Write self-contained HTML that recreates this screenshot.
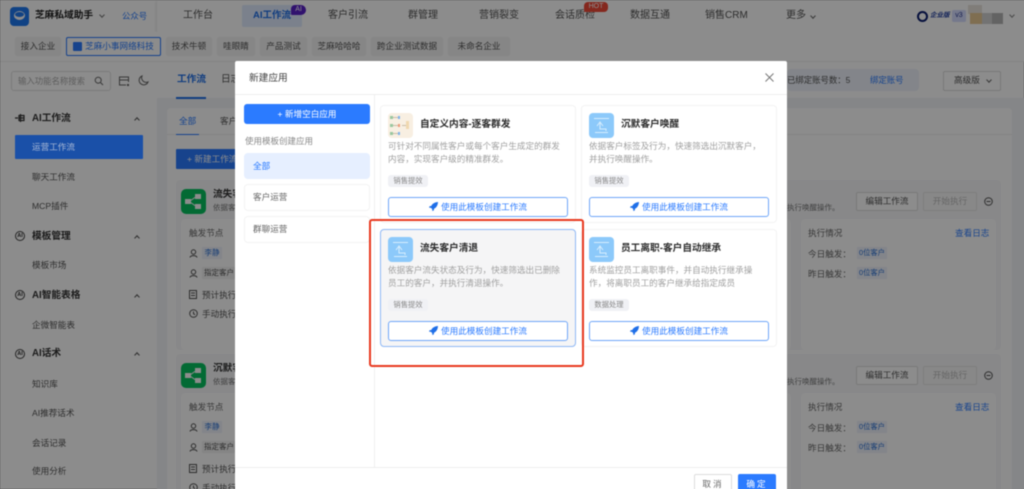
<!DOCTYPE html>
<html lang="zh"><head><meta charset="utf-8"><title>新建应用</title>
<style>
*{box-sizing:border-box}
html,body{margin:0;padding:0;width:1024px;height:489px;overflow:hidden;background:#8c8c8c}
body{font-family:"Liberation Sans","Noto Sans CJK SC",sans-serif;color:#333;position:relative}
.a{position:absolute;white-space:nowrap;line-height:1}
.b{position:absolute}
#root{position:absolute;left:-6px;top:-6px;width:1036px;height:501px;overflow:hidden;filter:blur(.5px)}
#in{position:absolute;left:6px;top:6px;width:1024px;height:489px;background:#fff}
.tag{position:absolute;top:37px;height:19px;background:#f5f5f5;border-radius:2px;font-size:8.6px;line-height:19px;text-align:center;color:#555}
.nav{position:absolute;top:11px;font-size:10px;line-height:10px;color:#555;white-space:nowrap}
.si{position:absolute;left:32px;font-size:8.6px;line-height:10px;color:#555;white-space:nowrap}
.sh{position:absolute;left:32px;font-size:9.7px;line-height:10px;font-weight:700;color:#333;white-space:nowrap}
.ci{position:absolute;left:15px;width:10px;height:10px;border:1px solid #444;border-radius:50%;font-size:5.5px;line-height:8px;text-align:center;color:#333;font-weight:700}
.ch{position:absolute;left:135px;width:4px;height:4px;border-left:1px solid #555;border-top:1px solid #555;transform:rotate(45deg)}
.card{position:absolute;left:176px;width:825px;height:170px;background:#f7f8fa;border-radius:4px}
.g{position:absolute;left:5px;top:9px;width:25px;height:25px;background:#07c160;border-radius:5px}
.pn{position:absolute;background:#fff;border-radius:4px}
.t9{position:absolute;font-size:8.6px;line-height:10px;color:#555;white-space:nowrap}
.mc{position:absolute;width:196px;background:#fff;border:1px solid #f3f3f3;border-radius:4px}
.ic{position:absolute;left:7px;top:7px;width:25px;height:25px;background:#8cc9fa;border-radius:4px}
.tt{position:absolute;left:39px;top:13px;font-size:9.7px;line-height:12px;font-weight:700;color:#2c2c2c;white-space:nowrap}
.ds{position:absolute;left:7px;font-size:8.6px;line-height:10px;color:#a0a0a0;white-space:nowrap}
.lb{position:absolute;left:7px;width:40px;height:12px;background:#f0f1f5;border-radius:3px;font-size:7.3px;line-height:12px;text-align:center;color:#888}
.bt{position:absolute;left:7px;width:180px;height:20px;border:1px solid #6fa6f8;border-radius:3px;background:#fff;font-size:8.6px;line-height:18px;text-align:center;color:#2b7bff}
.bt svg{vertical-align:-1px;margin-right:3px}
.lc{position:absolute;left:9px;width:126px;height:27px;border:1px solid #f3f3f3;border-radius:4px;font-size:8.6px;line-height:25px;padding-left:8px;color:#666}
</style></head><body><div id="root"><div id="in">

<!-- background page -->
<div class="b" style="left:157px;top:0;width:873px;height:32px;background:#fff;box-shadow:0 1px 3px rgba(0,0,0,.18)"></div>
<div class="b" style="left:10px;top:7px;width:19px;height:19px;background:#1e78f0;border-radius:4px"></div>
<div class="b" style="left:14px;top:11px;width:11px;height:9px;background:#fff;border-radius:50%"></div>
<div class="b" style="left:15px;top:12px;width:9px;height:5px;background:#1e78f0;border-radius:50%"></div>
<div class="a" style="left:35px;top:11px;font-size:9.7px;font-weight:700;color:#222">芝麻私域助手</div>
<div class="b" style="left:100px;top:13px;width:4px;height:4px;border-right:1px solid #777;border-bottom:1px solid #777;transform:rotate(45deg)"></div>
<div class="a" style="left:122px;top:12px;font-size:8.4px;color:#2b7bff">公众号</div>

<div class="nav" style="left:183px">工作台</div>
<div class="b" style="left:242px;top:5px;width:60px;height:22px;background:#e0ebff;border-radius:2px"></div>
<div class="nav" style="left:253px;color:#1f6fe8;font-weight:700;font-size:9.5px">AI工作流</div>
<div class="b" style="left:291px;top:5px;width:15px;height:10px;background:#5a22c9;border-radius:4px 5px 5px 1px;color:#fff;font-size:7px;line-height:10px;text-align:center">AI</div>
<div class="nav" style="left:328px">客户引流</div>
<div class="nav" style="left:408px">群管理</div>
<div class="nav" style="left:479px">营销裂变</div>
<div class="nav" style="left:555px">会话质检</div>
<div class="b" style="left:584px;top:2px;width:24px;height:10px;background:#f04a38;border-radius:4px 4px 4px 1px;color:#fff;font-size:7px;line-height:10px;text-align:center">HOT</div>
<div class="nav" style="left:630px">数据互通</div>
<div class="nav" style="left:705px">销售CRM</div>
<div class="nav" style="left:786px">更多</div>
<div class="b" style="left:811px;top:14px;width:4px;height:4px;border-right:1px solid #666;border-bottom:1px solid #666;transform:rotate(45deg)"></div>

<div class="b" style="left:917px;top:11px;width:11px;height:11px;border:2.5px solid #0a1d6e;border-radius:50%"></div>
<div class="a" style="left:930px;top:13px;font-size:6.5px;font-style:italic;font-weight:700;color:#1c3a9e">企业版</div>
<div class="b" style="left:952px;top:10px;width:14px;height:12px;background:#d5dcff;border-radius:2px;color:#2a3a90;font-size:7px;line-height:12px;text-align:center">v3</div>
<div class="b" style="left:968px;top:5px;width:14px;height:9px;background:#e9e3dc"></div>
<div class="b" style="left:970px;top:13px;width:12px;height:11px;background:#e8c894"></div>
<div class="b" style="left:982px;top:13px;width:10px;height:11px;background:#d2d2d2"></div>
<div class="b" style="left:992px;top:13px;width:11px;height:11px;background:#b5b5b5"></div>
<div class="b" style="left:1010px;top:13px;width:4px;height:4px;border-right:1px solid #888;border-bottom:1px solid #888;transform:rotate(45deg)"></div>

<div class="b" style="left:0;top:32px;width:1030px;height:30px;background:#fff;border-bottom:1px solid #eee"></div>
<div class="tag" style="left:15px;width:46px">接入企业</div>
<div class="tag" style="left:66px;width:95px;background:#fff;border:1px solid #2b7bff;color:#2b7bff;line-height:17px;padding-left:12px">芝麻小事网络科技</div>
<div class="b" style="left:73px;top:42px;width:9px;height:9px;background:#2b7bff;border-radius:1px"></div>
<div class="tag" style="left:166px;width:46px">技术牛顿</div>
<div class="tag" style="left:217px;width:38px">哇眼睛</div>
<div class="tag" style="left:260px;width:47px">产品测试</div>
<div class="tag" style="left:312px;width:54px">芝麻哈哈哈</div>
<div class="tag" style="left:371px;width:72px">跨企业测试数据</div>
<div class="tag" style="left:448px;width:62px">未命名企业</div>

<!-- sidebar -->
<div class="b" style="left:11px;top:71px;width:100px;height:20px;border:1px solid #e0e0e0;border-radius:3px"></div>
<div class="a" style="left:18px;top:77px;font-size:8.4px;color:#aaa">输入功能名称搜索</div>
<svg class="b" style="left:94px;top:76px" width="10" height="10" viewBox="0 0 10 10" fill="none" stroke="#666"><circle cx="4.2" cy="4.2" r="3"/><path d="M6.5 6.5L9 9"/></svg>
<svg class="b" style="left:118px;top:75px" width="12" height="12" viewBox="0 0 12 12" fill="none" stroke="#666"><path d="M8 10H1.500V2h9v5M1.500 5h9"/><path d="M10 9v2" stroke-width="2"/></svg>
<svg class="b" style="left:138px;top:75px" width="11" height="11" viewBox="0 0 11 11" fill="none" stroke="#666"><path d="M4 1a4.600 4.600 0 1 0 6 6A4.600 4.600 0 0 1 4 1z"/></svg>

<svg class="b" style="left:15px;top:113px" width="10" height="10" viewBox="0 0 10 10" fill="none" stroke="#333" stroke-width="1.200"><path d="M0 5h3M4 2.500h5v5H4zM4 5h5M5.500 1v8"/></svg>
<div class="sh" style="top:114px">AI工作流</div><div class="ch" style="top:118px"></div>
<div class="si" style="top:172px">聊天工作流</div>
<div class="si" style="top:201px">MCP插件</div>
<div class="ci" style="top:231px">AI</div><div class="sh" style="top:232px">模板管理</div><div class="ch" style="top:236px"></div>
<div class="si" style="top:260px">模板市场</div>
<div class="ci" style="top:290px">AI</div><div class="sh" style="top:291px">AI智能表格</div><div class="ch" style="top:295px"></div>
<div class="si" style="top:320px">企微智能表</div>
<div class="ci" style="top:349px">AI</div><div class="sh" style="top:349px">AI话术</div><div class="ch" style="top:353px"></div>
<div class="si" style="top:379px">知识库</div>
<div class="si" style="top:408px">AI推荐话术</div>
<div class="si" style="top:438px">会话记录</div>
<div class="si" style="top:466px">使用分析</div>

<!-- main -->
<div class="a" style="left:177px;top:75px;font-size:9.7px;font-weight:700;color:#1f6fe8">工作流</div>
<div class="a" style="left:221px;top:75px;font-size:9.7px;color:#555">日志</div>
<div class="b" style="left:157px;top:98px;width:873px;height:397px;background:#f2f4f7"></div>
<div class="b" style="left:176px;top:97px;width:30px;height:2px;background:#1f6fe8"></div>
<div class="b" style="left:787px;top:69px;width:132px;height:22px;background:#eef3fb;border-radius:4px"></div>
<div class="a" style="left:787px;top:76px;font-size:8.4px;color:#555">已绑定账号数：5</div>
<div class="a" style="left:870px;top:76px;font-size:8.4px;color:#2b7bff">绑定账号</div>
<div class="b" style="left:943px;top:71px;width:58px;height:20px;background:#fff;border:1px solid #ddd;border-radius:2px"></div>
<div class="a" style="left:954px;top:76px;font-size:8.6px;color:#555">高级版</div>
<div class="b" style="left:987px;top:78px;width:4px;height:4px;border-right:1px solid #666;border-bottom:1px solid #666;transform:rotate(45deg)"></div>
<div class="b" style="left:167px;top:108px;width:845px;height:387px;background:#fff;border-radius:4px"></div>
<div class="b" style="left:167px;top:134px;width:845px;height:1px;background:#eee"></div>
<div class="a" style="left:179px;top:117px;font-size:8.6px;color:#2b7bff">全部</div>
<div class="b" style="left:176px;top:134px;width:23px;height:1px;background:#2b7bff"></div>
<div class="a" style="left:220px;top:117px;font-size:8.6px;color:#555">客户</div>
<div class="b" style="left:176px;top:149px;width:64px;height:20px;background:#2b7bff;border-radius:1px"></div>
<div class="a" style="left:187px;top:155px;font-size:8.6px;color:#fff">+ 新建工作流</div>

<div class="card" style="top:180px">
 <div class="g"></div>
 <svg class="b" style="left:9px;top:14px" width="17" height="15" viewBox="0 0 17 15" fill="#fff"><rect x="0" y="5" width="6" height="5"/><rect x="10" y="0" width="6" height="5"/><rect x="10" y="10" width="6" height="5"/><path d="M5 7L12 2M5 8l7 5" stroke="#fff"/></svg>
 <div class="a" style="left:37px;top:10px;font-size:9.7px;font-weight:700;color:#333">流失客户清退</div>
 <div class="a" style="left:37px;top:24px;font-size:7.5px;color:#777">依据客户</div>
 <div class="pn" style="left:5px;top:39px;width:610px;height:131px"></div>
 <div class="t9" style="left:13px;top:48px;color:#666">触发节点</div>
 <svg class="b" style="left:13px;top:69px" width="9" height="9" viewBox="0 0 9 9" fill="none" stroke="#555"><circle cx="4.500" cy="3" r="2.200"/><path d="M1 8.500c.5-2.500 6.500-2.500 7 0"/></svg>
 <div class="a" style="left:26px;top:67px;width:20px;height:12px;background:#eef3fb;font-size:7.5px;line-height:12px;text-align:center;color:#2b6fd4">李静</div>
 <svg class="b" style="left:13px;top:89px" width="9" height="9" viewBox="0 0 9 9" fill="none" stroke="#555"><circle cx="4.500" cy="3" r="2.200"/><path d="M1 8.500c.5-2.500 6.500-2.500 7 0"/></svg>
 <div class="a" style="left:26px;top:87px;width:40px;height:12px;background:#f2f2f2;font-size:7.5px;line-height:12px;padding-left:2px;color:#555">指定客户</div>
 <svg class="b" style="left:13px;top:110px" width="9" height="9" viewBox="0 0 9 9" fill="none" stroke="#555"><rect x=".5" y=".5" width="7" height="8"/><path d="M2 3h4M2 5.500h4"/></svg>
 <div class="t9" style="left:26px;top:110px">预计执行</div>
 <svg class="b" style="left:13px;top:129px" width="9" height="9" viewBox="0 0 9 9" fill="none" stroke="#555"><circle cx="4.500" cy="4.500" r="3.800"/><path d="M4.500 2.500v2.200l1.500 1"/></svg>
 <div class="t9" style="left:26px;top:129px">手动执行</div>
 <div class="b" style="left:680px;top:12px;width:62px;height:19px;background:#fff;border:1px solid #ddd;border-radius:2px;font-size:8.6px;line-height:17px;text-align:center;color:#555">编辑工作流</div>
 <div class="b" style="left:747px;top:12px;width:54px;height:19px;background:#f7f7f7;border:1px solid #e4e4e4;border-radius:2px;font-size:8.6px;line-height:17px;text-align:center;color:#bbb">开始执行</div>
 <svg class="b" style="left:808px;top:17px" width="9" height="9" viewBox="0 0 9 9" fill="none" stroke="#555"><circle cx="4.500" cy="4.500" r="3.800"/><path d="M2.500 4.500h4"/></svg>
 <div class="a" style="left:611px;top:24px;font-size:7.5px;color:#777">执行唤醒操作。</div>
 <div class="pn" style="left:625px;top:39px;width:195px;height:131px"></div>
 <div class="t9" style="left:632px;top:48px;color:#666">执行情况</div>
 <div class="t9" style="left:779px;top:48px;color:#2b7bff">查看日志</div>
 <div class="t9" style="left:632px;top:69px;color:#666">今日触发：</div>
 <div class="a" style="left:681px;top:67px;width:30px;height:12px;background:#eef3fb;font-size:7.3px;line-height:12px;text-align:center;color:#2b6fd4">0位客户</div>
 <div class="t9" style="left:632px;top:89px;color:#666">昨日触发：</div>
 <div class="a" style="left:681px;top:87px;width:30px;height:12px;background:#eef3fb;font-size:7.3px;line-height:12px;text-align:center;color:#2b6fd4">0位客户</div>
</div>

<div class="card" style="top:354px;height:141px">
 <div class="g"></div>
 <svg class="b" style="left:9px;top:14px" width="17" height="15" viewBox="0 0 17 15" fill="#fff"><rect x="0" y="5" width="6" height="5"/><rect x="10" y="0" width="6" height="5"/><rect x="10" y="10" width="6" height="5"/><path d="M5 7L12 2M5 8l7 5" stroke="#fff"/></svg>
 <div class="a" style="left:37px;top:10px;font-size:9.7px;font-weight:700;color:#333">沉默客户唤醒</div>
 <div class="a" style="left:37px;top:24px;font-size:7.5px;color:#777">依据客户</div>
 <div class="pn" style="left:5px;top:39px;width:610px;height:102px"></div>
 <div class="t9" style="left:13px;top:48px;color:#666">触发节点</div>
 <svg class="b" style="left:13px;top:69px" width="9" height="9" viewBox="0 0 9 9" fill="none" stroke="#555"><circle cx="4.500" cy="3" r="2.200"/><path d="M1 8.500c.5-2.500 6.500-2.500 7 0"/></svg>
 <div class="a" style="left:26px;top:67px;width:20px;height:12px;background:#eef3fb;font-size:7.5px;line-height:12px;text-align:center;color:#2b6fd4">李静</div>
 <svg class="b" style="left:13px;top:89px" width="9" height="9" viewBox="0 0 9 9" fill="none" stroke="#555"><circle cx="4.500" cy="3" r="2.200"/><path d="M1 8.500c.5-2.500 6.500-2.500 7 0"/></svg>
 <div class="a" style="left:26px;top:87px;width:40px;height:12px;background:#f2f2f2;font-size:7.5px;line-height:12px;padding-left:2px;color:#555">指定客户</div>
 <svg class="b" style="left:13px;top:110px" width="9" height="9" viewBox="0 0 9 9" fill="none" stroke="#555"><rect x=".5" y=".5" width="7" height="8"/><path d="M2 3h4M2 5.500h4"/></svg>
 <div class="t9" style="left:26px;top:110px">预计执行</div>
 <svg class="b" style="left:13px;top:129px" width="9" height="9" viewBox="0 0 9 9" fill="none" stroke="#555"><circle cx="4.500" cy="4.500" r="3.800"/><path d="M4.500 2.500v2.200l1.500 1"/></svg>
 <div class="t9" style="left:26px;top:129px">手动执行</div>
 <div class="b" style="left:680px;top:12px;width:62px;height:19px;background:#fff;border:1px solid #ddd;border-radius:2px;font-size:8.6px;line-height:17px;text-align:center;color:#555">编辑工作流</div>
 <div class="b" style="left:747px;top:12px;width:54px;height:19px;background:#f7f7f7;border:1px solid #e4e4e4;border-radius:2px;font-size:8.6px;line-height:17px;text-align:center;color:#bbb">开始执行</div>
 <svg class="b" style="left:808px;top:17px" width="9" height="9" viewBox="0 0 9 9" fill="none" stroke="#555"><circle cx="4.500" cy="4.500" r="3.800"/><path d="M2.500 4.500h4"/></svg>
 <div class="a" style="left:611px;top:24px;font-size:7.5px;color:#777">执行唤醒操作。</div>
 <div class="pn" style="left:625px;top:39px;width:195px;height:102px"></div>
 <div class="t9" style="left:632px;top:48px;color:#666">执行情况</div>
 <div class="t9" style="left:779px;top:48px;color:#2b7bff">查看日志</div>
 <div class="t9" style="left:632px;top:69px;color:#666">今日触发：</div>
 <div class="a" style="left:681px;top:67px;width:30px;height:12px;background:#eef3fb;font-size:7.3px;line-height:12px;text-align:center;color:#2b6fd4">0位客户</div>
 <div class="t9" style="left:632px;top:89px;color:#666">昨日触发：</div>
 <div class="a" style="left:681px;top:87px;width:30px;height:12px;background:#eef3fb;font-size:7.3px;line-height:12px;text-align:center;color:#2b6fd4">0位客户</div>
</div>

<!-- overlay -->
<div class="b" style="left:-6px;top:-6px;width:1036px;height:501px;background:rgba(0,0,0,.45)"></div>

<!-- active sidebar item (sits above the overlay to match the dimmed blue) -->
<div class="b" style="left:15px;top:135px;width:128px;height:24px;background:#1a50a8;border-radius:1px"></div>
<div class="si" style="top:142px;color:#a9b9d6">运营工作流</div>

<!-- modal -->
<div class="b" style="left:235px;top:61px;width:552px;height:434px;background:#fff;border-radius:2px 2px 0 0">
 <div class="a" style="left:14px;top:13px;font-size:9.7px;color:#444">新建应用</div>
 <svg class="b" style="left:530px;top:12px" width="9" height="9" viewBox="0 0 9 9" stroke="#777" fill="none"><path d="M.5.5l8 8M8.500.5l-8 8"/></svg>
 <div class="b" style="left:0;top:33px;width:552px;height:1px;background:#eee"></div>
 <div class="b" style="left:139px;top:34px;width:1px;height:372px;background:#f0f0f0"></div>
 <div class="b" style="left:0;top:406px;width:552px;height:1px;background:#eee"></div>

 <div class="b" style="left:9px;top:43px;width:126px;height:20px;background:#2b7bff;border-radius:3px;font-size:8.6px;line-height:20px;text-align:center;color:#fff">+ 新增空白应用</div>
 <div class="a" style="left:10px;top:76px;font-size:8.5px;color:#888">使用模板创建应用</div>
 <div class="lc" style="top:92px;height:26px;background:#e6efff;border-color:#e6efff;color:#2b7bff">全部</div>
 <div class="lc" style="top:123px">客户运营</div>
 <div class="lc" style="top:155px">群聊运营</div>

 <div class="mc" style="left:145px;top:44px;height:118px">
  <div class="ic" style="background:#f8efe2"></div>
  <svg class="b" style="left:9px;top:9px" width="22" height="21" viewBox="0 0 22 21"><g fill="#9ac7a0"><rect x="0" y="1" width="3" height="3"/><rect x="0" y="9" width="3" height="3"/><rect x="0" y="17" width="3" height="3"/></g><g fill="#7fb2ea"><rect x="8" y="1" width="2" height="3"/><rect x="8" y="17" width="2" height="3"/></g><rect x="8" y="9" width="2" height="3" fill="#ef9b7a"/><g stroke="#c9bda8" fill="none"><path d="M3 2.500h5M3 10.500h5M3 18.500h5M12 10.500h6"/></g><rect x="16" y="6" width="3" height="8" fill="#f0d8b0"/></svg>
  <div class="tt">自定义内容-逐客群发</div>
  <div class="ds" style="top:35px">可针对不同属性客户或每个客户生成定的群发</div>
  <div class="ds" style="top:48px">内容，实现客户级的精准群发。</div>
  <div class="lb" style="top:69px">销售提效</div>
  <div class="bt" style="top:91px"><svg width="9" height="9" viewBox="0 0 8 8"><path d="M8 0C5 .2 3 1.500 2 3.500L.5 3.800 0 5l1.800.2 1 1 .2 1.800 1.200-.5.3-1.500C6.500 5 7.800 3 8 0z" fill="#1f6fe8"/></svg>使用此模板创建工作流</div>
 </div>
 <div class="mc" style="left:346px;top:44px;height:118px">
  <div class="ic"></div>
  <svg class="b" style="left:9px;top:10px" width="21" height="19" viewBox="0 0 21 19" stroke="#d6edfd" fill="none"><path d="M3 2.500h15M9 6v7h6v2M6 10l3-4 3 4M4 16.500h13"/></svg>
  <div class="tt">沉默客户唤醒</div>
  <div class="ds" style="top:35px">依据客户标签及行为，快速筛选出沉默客户，</div>
  <div class="ds" style="top:48px">并执行唤醒操作。</div>
  <div class="lb" style="top:69px">销售提效</div>
  <div class="bt" style="top:91px"><svg width="9" height="9" viewBox="0 0 8 8"><path d="M8 0C5 .2 3 1.500 2 3.500L.5 3.800 0 5l1.800.2 1 1 .2 1.800 1.200-.5.3-1.500C6.500 5 7.800 3 8 0z" fill="#1f6fe8"/></svg>使用此模板创建工作流</div>
 </div>
 <div class="mc" style="left:145px;top:168px;height:118px;background:#f5f5f6;border-color:#8fb8f5">
  <div class="ic"></div>
  <svg class="b" style="left:9px;top:10px" width="21" height="19" viewBox="0 0 21 19" stroke="#d6edfd" fill="none"><path d="M3 2.500h15M9 6v7h6v2M6 10l3-4 3 4M4 16.500h13"/></svg>
  <div class="tt">流失客户清退</div>
  <div class="ds" style="top:35px">依据客户流失状态及行为，快速筛选出已删除</div>
  <div class="ds" style="top:48px">员工的客户，并执行清退操作。</div>
  <div class="lb" style="top:69px">销售提效</div>
  <div class="bt" style="top:91px"><svg width="9" height="9" viewBox="0 0 8 8"><path d="M8 0C5 .2 3 1.500 2 3.500L.5 3.800 0 5l1.800.2 1 1 .2 1.800 1.200-.5.3-1.500C6.500 5 7.800 3 8 0z" fill="#1f6fe8"/></svg>使用此模板创建工作流</div>
 </div>
 <div class="mc" style="left:346px;top:168px;height:118px">
  <div class="ic"></div>
  <svg class="b" style="left:9px;top:10px" width="21" height="19" viewBox="0 0 21 19" stroke="#d6edfd" fill="none"><path d="M3 2.500h15M9 6v7h6v2M6 10l3-4 3 4M4 16.500h13"/></svg>
  <div class="tt">员工离职-客户自动继承</div>
  <div class="ds" style="top:35px">系统监控员工离职事件，并自动执行继承操</div>
  <div class="ds" style="top:48px">作，将离职员工的客户继承给指定成员</div>
  <div class="lb" style="top:69px">数据处理</div>
  <div class="bt" style="top:91px"><svg width="9" height="9" viewBox="0 0 8 8"><path d="M8 0C5 .2 3 1.500 2 3.500L.5 3.800 0 5l1.800.2 1 1 .2 1.800 1.200-.5.3-1.500C6.500 5 7.800 3 8 0z" fill="#1f6fe8"/></svg>使用此模板创建工作流</div>
 </div>

 <div class="b" style="left:459px;top:413px;width:38px;height:20px;border:1px solid #ddd;border-radius:2px;font-size:8.6px;line-height:18px;text-align:center;letter-spacing:2px;color:#666">取消</div>
 <div class="b" style="left:503px;top:413px;width:38px;height:20px;background:#2b7bff;border-radius:2px;font-size:8.6px;line-height:20px;text-align:center;letter-spacing:2px;color:#fff">确定</div>
</div>

<!-- red highlight -->
<div class="b" style="left:369px;top:219px;width:215px;height:148px;border:2px solid #e8391f;border-radius:3px"></div>

</div></div></body></html>
